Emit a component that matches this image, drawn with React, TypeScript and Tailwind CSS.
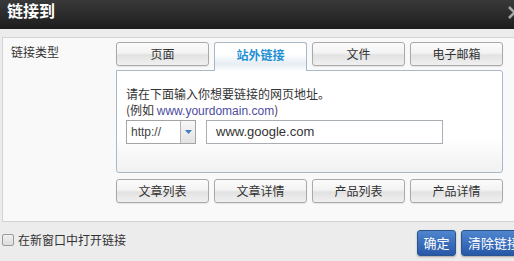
import React from 'react';

const cjk = '"Noto Sans CJK SC", "Liberation Sans", sans-serif';

const tabs = ['页面', '站外链接', '文件', '电子邮箱'];
const shortcuts = ['文章列表', '文章详情', '产品列表', '产品详情'];

function GrayButton({ label }: { label: string }) {
  return (
    <div className="w-[93px] h-[24px] flex items-center justify-center rounded-[3px] border border-[#a9a9a9] bg-[linear-gradient(#fbfbfb_0%,#f3f3f3_45%,#e2e2e2_55%,#f0f0f0_100%)] text-[12px] text-[#333] shadow-[0_1px_1px_rgba(0,0,0,0.08)]">
      {label}
    </div>
  );
}

export default function App() {
  return (
    <div
      className="w-[514px] h-[261px] overflow-hidden bg-[#ececec] flex flex-col"
      style={{ fontFamily: cjk }}
    >
      {/* title bar */}
      <div className="h-[29px] shrink-0 flex items-start bg-[linear-gradient(#393939,#1d1d1d)]">
        <span className="ml-[7px] text-[16px] leading-[20px] font-bold text-white">链接到</span>
        <svg className="ml-auto mt-[5px] mr-[-8px]" width="15" height="15" viewBox="0 0 15 15">
          <path d="M2 2 L13 13 M13 2 L2 13" stroke="#a8a8a8" strokeWidth="2.6" fill="none" />
        </svg>
      </div>

      {/* main panel */}
      <div className="mt-[8px] ml-[2px] w-[540px] h-[185px] shrink-0 border border-[#d3d3d3] bg-[#f9f9f9] flex">
        <div className="w-[113px] shrink-0 pl-[8px] pt-[5px] text-[12px] leading-[18px] text-[#333]">链接类型</div>
        <div className="w-[387px] pt-[4px] flex flex-col">
          <div className="h-[28px] flex items-start gap-[5px]">
            {tabs.map((t, i) =>
              i === 1 ? (
                <div
                  key={t}
                  className="relative z-10 w-[93px] h-[29px] pb-[4px] flex items-center justify-center rounded-t-[3px] border border-b-0 border-[#a9b8c6] bg-[linear-gradient(#ffffff_0%,#ffffff_40%,#e6edf3_75%,#ffffff_100%)] text-[12px] font-bold text-[#1f8fd4]"
                >
                  {t}
                </div>
              ) : (
                <GrayButton key={t} label={t} />
              )
            )}
          </div>
          <div className="h-[103px] rounded-b-[3px] rounded-tr-[3px] border border-[#a9b8c6] bg-[linear-gradient(#ffffff_0%,#ffffff_65%,#f1f1f1_100%)] pl-[9px] pt-[15px]">
            <div className="text-[12px] leading-[16px] text-[#333]">请在下面输入你想要链接的网页地址。</div>
            <div className="text-[12px] leading-[16px] text-[#333]">
              (例如 <span className="text-[#4d4d9e]" style={{ fontFamily: '"Liberation Sans", sans-serif' }}>www.yourdomain.com</span>)
            </div>
            <div className="mt-[1px] flex gap-[10px]" style={{ fontFamily: '"Liberation Sans", sans-serif' }}>
              <div className="w-[70px] h-[24px] flex border border-[#a5a5a5] bg-white">
                <span className="flex-1 pl-[4px] text-[12px] leading-[22px] text-[#444]">http://</span>
                <div className="w-[15px] border-l border-[#b5b5b5] bg-[linear-gradient(#f7f7f7,#e3e3e3)] flex items-center justify-center">
                  <svg width="7" height="4" viewBox="0 0 7 4">
                    <path d="M0 0 L7 0 L3.5 4 Z" fill="#3d7fc2" />
                  </svg>
                </div>
              </div>
              <div className="w-[237px] h-[24px] border border-[#a9aeb5] bg-white pl-[9px] text-[13px] leading-[22px] text-[#333]">
                www.google.com
              </div>
            </div>
          </div>
          <div className="mt-[6px] flex gap-[5px]">
            {shortcuts.map(s => (
              <GrayButton key={s} label={s} />
            ))}
          </div>
        </div>
      </div>

      {/* footer */}
      <div className="flex items-start">
        <div className="ml-[2px] mt-[10px] flex items-center gap-[4px]">
          <div className="w-[12px] h-[12px] rounded-[2px] border border-[#9a9a9a] bg-[linear-gradient(#f0f0f0,#dcdcdc)]" />
          <span className="text-[12px] leading-[16px] text-[#333]">在新窗口中打开链接</span>
        </div>
        <div className="ml-auto mt-[8px] mr-[-13px] flex gap-[5px]">
          <div className="w-[39px] h-[26px] flex items-center justify-center rounded-[3px] border border-[#2b558f] bg-[linear-gradient(#4f85cf,#2758a8)] text-[13px] text-white shadow-[0_1px_2px_rgba(0,0,0,0.3)]">
            确定
          </div>
          <div className="w-[66px] h-[26px] flex items-center justify-center rounded-[3px] border border-[#2b558f] bg-[linear-gradient(#4f85cf,#2758a8)] text-[13px] text-white shadow-[0_1px_2px_rgba(0,0,0,0.3)]">
            清除链接
          </div>
        </div>
      </div>
    </div>
  );
}
